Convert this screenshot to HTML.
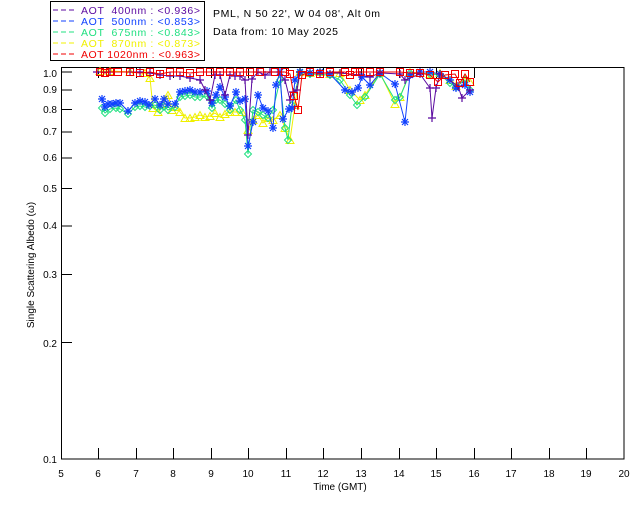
<!DOCTYPE html>
<html><head><meta charset="utf-8"><style>
html,body{margin:0;padding:0;background:#fff;}
svg{display:block;font-family:"Liberation Sans",sans-serif;}
</style></head><body>
<svg width="640" height="512" viewBox="0 0 640 512" xmlns="http://www.w3.org/2000/svg">
<defs>
<marker id="mR" markerUnits="userSpaceOnUse" markerWidth="10" markerHeight="10" refX="5" refY="5" overflow="visible"><rect x="1.5" y="1.5" width="7" height="7" fill="none" stroke="#f00000"/></marker>
<marker id="mB" markerUnits="userSpaceOnUse" markerWidth="10" markerHeight="10" refX="5" refY="5" overflow="visible"><path d="M1,5h8M5,1v8M2,2l6,6M8,2l-6,6" stroke="#1040ff" stroke-width="1.2"/></marker>
<marker id="mG" markerUnits="userSpaceOnUse" markerWidth="10" markerHeight="10" refX="5" refY="5" overflow="visible"><path d="M5,1.5l3.5,3.5l-3.5,3.5l-3.5,-3.5z" fill="none" stroke="#20e080"/></marker>
<marker id="mY" markerUnits="userSpaceOnUse" markerWidth="10" markerHeight="10" refX="5" refY="5" overflow="visible"><path d="M1,8.5l4,-7l4,7z" fill="none" stroke="#f0f000"/></marker>
<marker id="mP" markerUnits="userSpaceOnUse" markerWidth="10" markerHeight="10" refX="5" refY="5" overflow="visible"><path d="M1,5h8M5,1v8" stroke="#5b0aa0" stroke-width="1.2"/></marker>
</defs>
<rect x="0" y="0" width="640" height="512" fill="#fff"/>
<rect x="50.5" y="1.5" width="154" height="59" fill="#fff" stroke="#000" stroke-width="1"/>
<g font-size="10.5">
<line x1="53" y1="10" x2="76" y2="10" stroke="#5b0aa0" stroke-dasharray="5,3"/>
<text x="81" y="14" fill="#5b0aa0" textLength="119" lengthAdjust="spacing" xml:space="preserve">AOT  400nm : &lt;0.936&gt;</text>
<line x1="53" y1="21" x2="76" y2="21" stroke="#1040ff" stroke-dasharray="5,3"/>
<text x="81" y="25" fill="#1040ff" textLength="119" lengthAdjust="spacing" xml:space="preserve">AOT  500nm : &lt;0.853&gt;</text>
<line x1="53" y1="32" x2="76" y2="32" stroke="#20e080" stroke-dasharray="5,3"/>
<text x="81" y="36" fill="#20e080" textLength="119" lengthAdjust="spacing" xml:space="preserve">AOT  675nm : &lt;0.843&gt;</text>
<line x1="53" y1="43" x2="76" y2="43" stroke="#f0f000" stroke-dasharray="5,3"/>
<text x="81" y="47" fill="#f0f000" textLength="119" lengthAdjust="spacing" xml:space="preserve">AOT  870nm : &lt;0.873&gt;</text>
<line x1="53" y1="54" x2="76" y2="54" stroke="#f00000" stroke-dasharray="5,3"/>
<text x="81" y="58" fill="#f00000" textLength="119" lengthAdjust="spacing" xml:space="preserve">AOT 1020nm : &lt;0.963&gt;</text>
</g>
<text x="213" y="17" font-size="10.5" textLength="167" lengthAdjust="spacing">PML, N 50 22', W 04 08', Alt 0m</text>
<text x="213" y="35" font-size="10.5" textLength="125" lengthAdjust="spacing">Data from: 10 May 2025</text>

<rect x="61.5" y="67.5" width="562.5" height="391.5" fill="none" stroke="#000" stroke-width="1"/>
<g stroke="#000" stroke-width="1">
<line x1="61" y1="72" x2="72" y2="72"/><line x1="61" y1="90" x2="72" y2="90"/><line x1="61" y1="109.5" x2="72" y2="109.5"/>
<line x1="61" y1="132" x2="72" y2="132"/><line x1="61" y1="158" x2="72" y2="158"/><line x1="61" y1="188.5" x2="72" y2="188.5"/>
<line x1="61" y1="226" x2="72" y2="226"/><line x1="61" y1="274.5" x2="72" y2="274.5"/><line x1="61" y1="342.5" x2="72" y2="342.5"/>
<line x1="98.5" y1="459" x2="98.5" y2="448"/><line x1="136.5" y1="459" x2="136.5" y2="448"/><line x1="173.5" y1="459" x2="173.5" y2="448"/>
<line x1="211.5" y1="459" x2="211.5" y2="448"/><line x1="248.5" y1="459" x2="248.5" y2="448"/><line x1="286.5" y1="459" x2="286.5" y2="448"/>
<line x1="323.5" y1="459" x2="323.5" y2="448"/><line x1="361.5" y1="459" x2="361.5" y2="448"/><line x1="399.5" y1="459" x2="399.5" y2="448"/>
<line x1="436.5" y1="459" x2="436.5" y2="448"/><line x1="474.5" y1="459" x2="474.5" y2="448"/><line x1="511.5" y1="459" x2="511.5" y2="448"/>
<line x1="549.5" y1="459" x2="549.5" y2="448"/><line x1="586.5" y1="459" x2="586.5" y2="448"/>
<line x1="98.5" y1="67" x2="98.5" y2="78"/><line x1="136.5" y1="67" x2="136.5" y2="78"/><line x1="173.5" y1="67" x2="173.5" y2="78"/>
<line x1="211.5" y1="67" x2="211.5" y2="78"/><line x1="248.5" y1="67" x2="248.5" y2="78"/><line x1="286.5" y1="67" x2="286.5" y2="78"/>
<line x1="323.5" y1="67" x2="323.5" y2="78"/><line x1="361.5" y1="67" x2="361.5" y2="78"/><line x1="399.5" y1="67" x2="399.5" y2="78"/>
<line x1="436.5" y1="67" x2="436.5" y2="78"/><line x1="474.5" y1="67" x2="474.5" y2="78"/>
</g>
<g font-size="10" text-anchor="end">
<text x="57" y="77">1.0</text><text x="57" y="93">0.9</text><text x="57" y="113">0.8</text><text x="57" y="135">0.7</text>
<text x="57" y="161">0.6</text><text x="57" y="192">0.5</text><text x="57" y="229">0.4</text><text x="57" y="278">0.3</text>
<text x="57" y="347">0.2</text><text x="57" y="463">0.1</text>
</g>
<g font-size="10" text-anchor="middle">
<text x="61" y="477">5</text><text x="98" y="477">6</text><text x="136" y="477">7</text><text x="173" y="477">8</text>
<text x="211" y="477">9</text><text x="248" y="477">10</text><text x="286" y="477">11</text><text x="323" y="477">12</text>
<text x="361" y="477">13</text><text x="399" y="477">14</text><text x="436" y="477">15</text><text x="474" y="477">16</text>
<text x="511" y="477">17</text><text x="549" y="477">18</text><text x="586" y="477">19</text><text x="624" y="477">20</text>
<text x="340" y="490">Time (GMT)</text>
</g>
<text transform="translate(34,265) rotate(-90)" font-size="10" text-anchor="middle">Single Scattering Albedo (ω)</text>

<g fill="none" stroke-width="1">
<polyline stroke="#f0f000" marker-start="url(#mY)" marker-mid="url(#mY)" marker-end="url(#mY)" points="100,71 110,71 130,72 145,73 150,78 153,108 158,112 163,104 168,95 172,110 176,107 180,112 185,118 190,118 195,117 200,115 205,117 210,116 215,113 220,117 225,114 230,112 235,112 242,112 248,130 253,120 258,115 263,123 268,118 273,120 280,115 285,128 290,140 295,105 300,72 310,73 320,72 330,74 340,73 350,90 360,100 365,95 380,73 395,104 400,97 410,72 420,73 430,74 440,73 450,80 456,86 465,78 470,82"/>
<polyline stroke="#20e080" marker-start="url(#mG)" marker-mid="url(#mG)" marker-end="url(#mG)" points="102,108 105,113 110,109 116,108 120,109 128,114 135,107 140,106 145,107 150,106 155,105 160,110 164,106 168,110 175,107 180,97 185,96 190,95 195,97 200,97 207,96 212,108 216,100 220,100 225,104 230,110 236,100 240,110 245,120 248,154 253,110 258,112 263,115 268,118 273,110 280,80 285,128 288,140 292,105 300,72 310,74 330,75 340,80 350,95 357,105 365,97 380,74 395,100 400,97 410,73 430,74 440,75 450,83 456,87 465,80 470,90"/>
<polyline stroke="#1040ff" marker-start="url(#mB)" marker-mid="url(#mB)" marker-end="url(#mB)" points="102,99 105,107 108,104 112,104 116,103 120,103 128,111 135,103 140,101 145,102 149,105 155,99 160,105 164,99 168,104 175,104 180,92 185,91 190,90 195,92 200,92 207,91 212,103 216,95 220,87 225,97 230,106 236,92 240,101 245,99 248,146 253,122 258,95 263,108 268,111 273,128 276,85 280,72 283,119 289,109 292,108 295,80 300,72 310,73 320,72 330,74 345,90 352,92 358,88 362,77 370,85 380,73 395,84 405,122 410,75 420,72 430,72 440,74 450,80 456,88 465,85 470,92"/>
<polyline stroke="#5b0aa0" marker-start="url(#mP)" marker-mid="url(#mP)" marker-end="url(#mP)" points="97,72 110,72 130,72 140,72 150,73 160,75 170,76 180,76 190,78 200,80 205,90 210,100 215,75 220,75 225,95 230,75 235,76 240,76 245,80 248,135 252,79 258,72 265,75 270,72 278,72 285,80 290,100 293,92 297,90 300,72 320,73 340,73 360,75 370,77 380,73 400,74 405,80 420,74 430,88 432,118 436,88 440,74 458,86 462,98 470,90"/>
<polyline stroke="#f00000" marker-start="url(#mR)" marker-mid="url(#mR)" marker-end="url(#mR)" points="100,72 105,73 110,72 118,72 130,72 140,73 150,72 160,74 170,72 180,72 190,73 200,72 210,72 220,72 230,72 240,72 250,72 260,72 275,72 285,72 290,74 294,96 298,110 302,75 310,72 320,74 330,72 345,72 350,75 355,72 360,72 370,72 380,72 400,72 410,73 420,73 430,75 438,82 445,75 455,74 460,83 465,74 470,82"/>
</g>
</svg>
</body></html>
